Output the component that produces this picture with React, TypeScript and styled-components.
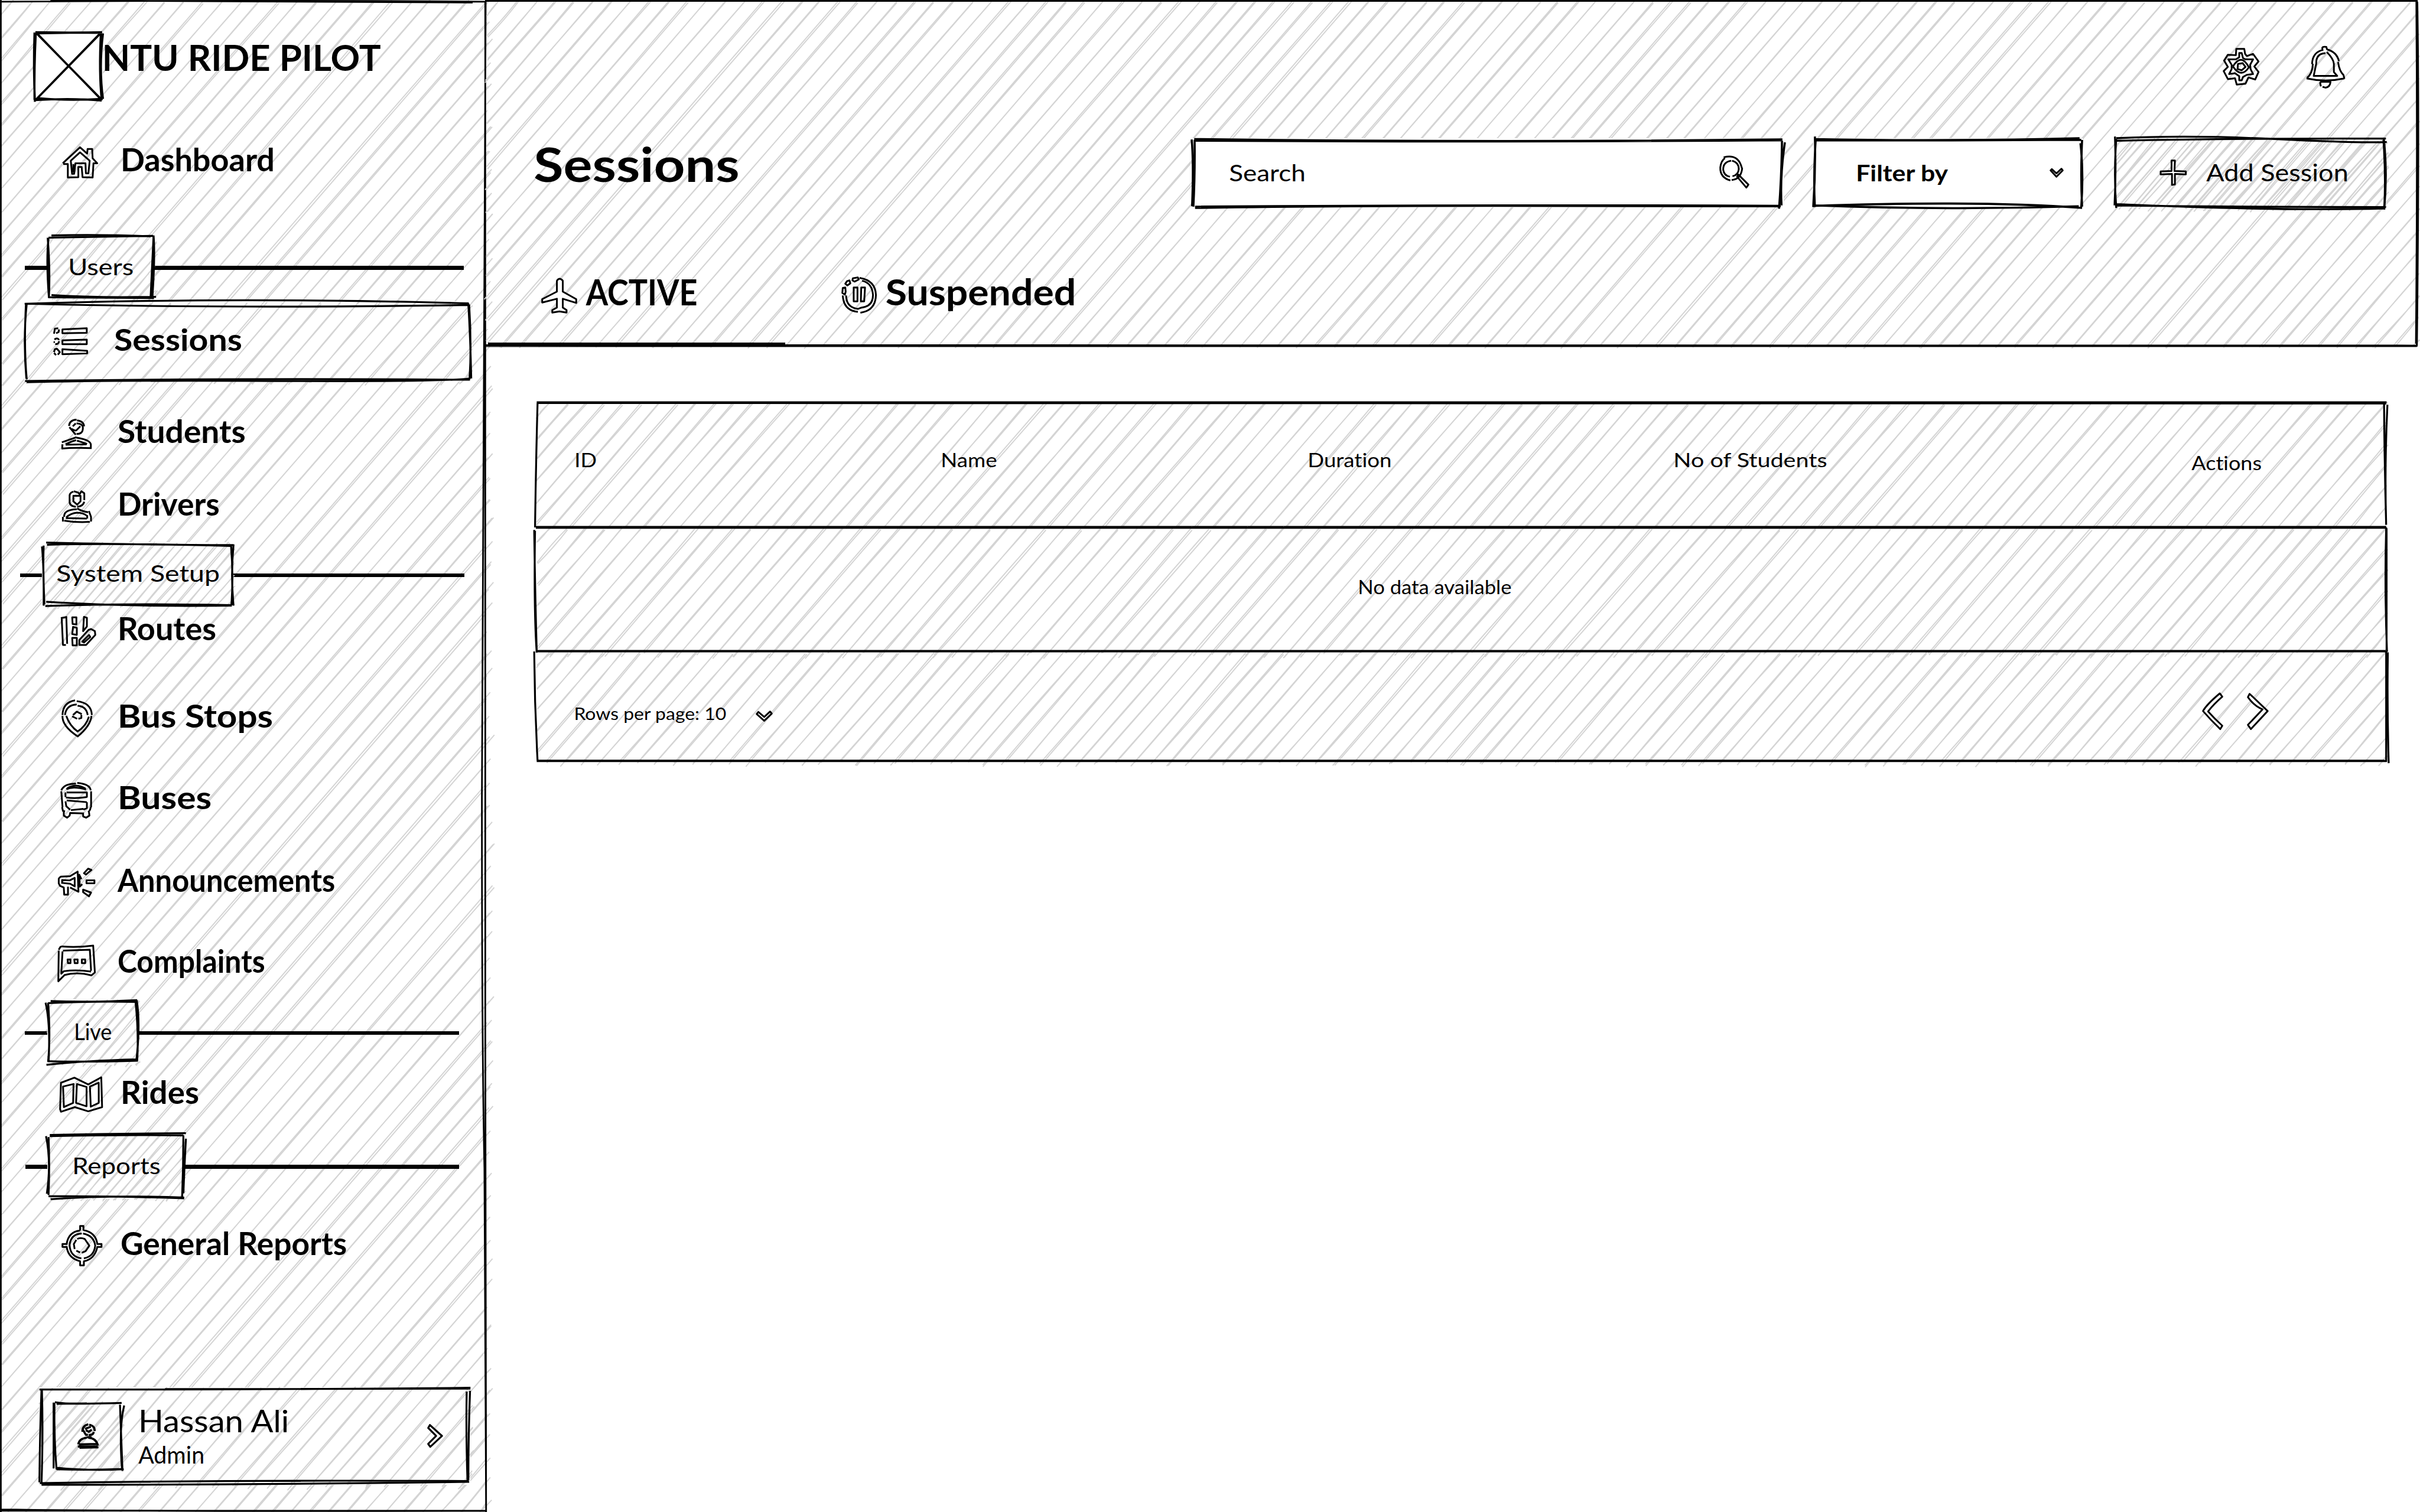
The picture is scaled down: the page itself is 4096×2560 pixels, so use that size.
import React, { useLayoutEffect, useRef } from 'react';
import styled, { createGlobalStyle } from 'styled-components';

/* Design units: the board is 5760 x 3600, shown at 4096 x 2560. */
const SCALE = 4096 / 5760;
const u = (n: number) => `${(n * SCALE).toFixed(2)}px`;

const INK = '#000';
const PENCIL = '#d4d4d4';

const GlobalStyle = createGlobalStyle`
  * { box-sizing: border-box; }
  html, body { margin: 0; padding: 0; background: #fff; }
  body { overflow: hidden; color: ${INK}; font-family: Lato, 'Open Sans', sans-serif; }
`;

/* ---------- pencil drawing ---------- */

const random = (seed: number) => {
  let s = seed * 7919 + 17;
  return () => {
    s = (s * 16807) % 2147483647;
    return s / 2147483647;
  };
};

function hatch(w: number, h: number, gap: number, seed: number, right: number, bottom: number) {
  const rnd = random(seed);
  const c = 0.656;
  const s = 0.755;
  const out: string[] = [];
  const j = (n: number) => (rnd() * 2 - 1) * n;
  for (let d = gap * 0.8; d < s * w + c * h; d += gap) {
    const onBottom = d / c > h;
    const onRight = d / s > w;
    const x1 = onBottom ? (d - c * h) / s : 0;
    const y1 = onBottom ? h : d / c;
    const x2 = onRight ? w : d / s;
    const y2 = onRight ? (d - s * w) / c : 0;
    for (let k = 0; k < 2; k++) {
      const a = onBottom ? rnd() * bottom : -rnd() * 8;
      const b = onRight ? rnd() * right : -rnd() * 8;
      const o1 = j(3.4);
      const o2 = j(3.4);
      const ax = x1 - c * a + s * o1;
      const ay = y1 + s * a + c * o1;
      const bx = x2 + c * b + s * o2;
      const by = y2 - s * b + c * o2;
      const mx = (ax + bx) / 2 + j(3);
      const my = (ay + by) / 2 + j(3);
      out.push(`M${ax.toFixed(1)} ${ay.toFixed(1)}Q${mx.toFixed(1)} ${my.toFixed(1)} ${bx.toFixed(1)} ${by.toFixed(1)}`);
    }
  }
  return out.join('');
}

const Drawing = styled.svg`
  position: absolute;
  inset: 0;
  width: 100%;
  height: 100%;
  overflow: visible;
  z-index: -1;
  fill: none;
`;

type SketchProps = {
  w: number;
  h: number;
  lines: string;
  gap?: number;
  seed?: number;
  right?: number;
  bottom?: number;
  pen?: number;
};

function Sketch({ w, h, lines, gap = 0, seed = 1, right = 4, bottom = 6, pen = 4.5 }: SketchProps) {
  return (
    <Drawing viewBox={`0 0 ${w} ${h}`} preserveAspectRatio="none" aria-hidden>
      {gap > 0 && <path d={hatch(w, h, gap, seed, right, bottom)} stroke={PENCIL} strokeWidth={2.7} />}
      <path d={lines} stroke={INK} strokeWidth={pen} />
    </Drawing>
  );
}

/* ---------- text ---------- */

const TextLine = styled.span<{ $size: number; $bold?: boolean; $width: number }>`
  display: block;
  flex: none;
  width: ${p => u(p.$width)};
  padding-top: ${u(3)};
  font-size: ${p => u(p.$size)};
  font-weight: ${p => (p.$bold ? 700 : 400)};
  font-variant-ligatures: none;
  line-height: 1.2;
  white-space: nowrap;
  transform-origin: 0 50%;
`;

/* A line of lettering stretched or condensed to the width it is given. */
function Text({ children, size, width, bold }: { children: string; size: number; width: number; bold?: boolean }) {
  const ref = useRef<HTMLSpanElement>(null);
  useLayoutEffect(() => {
    const el = ref.current;
    if (!el) return;
    const range = document.createRange();
    range.selectNodeContents(el);
    el.style.transform = 'none';
    const natural = range.getBoundingClientRect().width;
    const ratio = (width * SCALE + size * 0.03) / natural;
    el.style.transform = `translateX(${(-size * 0.015).toFixed(2)}px) scaleX(${ratio.toFixed(4)})`;
  }, [children, size, width]);
  return (
    <TextLine ref={ref} $size={size} $bold={bold} $width={width}>
      {children}
    </TextLine>
  );
}

/* ---------- icons ---------- */

type Glyph = { w: number; h: number; d: string };

const ICONS: Record<string, Glyph> = {
  home: {
    w: 82, h: 75,
    d: 'M-1 40L40 2L57 17L58 6H69L70 28L81 40H72L70 74L46 73L44 49H36V73L11 74V42H0M40 14L18 34L21 65H26L29 40H53L54 64H60L63 34ZM24 42V62',
  },
  list: {
    w: 82, h: 67,
    d: 'M22 4L80 1V12L22 13ZM22 30L80 28V39H22ZM22 51L81 55V61L22 63ZM2 14L4 2L12 1M14 4L13 10L7 13M3 28Q10 22 14 29M14 32Q12 41 5 38M1 34H4M2 58L4 51L9 50L16 58L11 64M2 60L7 65',
  },
  student: {
    w: 72, h: 72,
    d: 'M18 17Q19 3 36 2M37 4Q53 6 54 18M19 20L34 38M36 36Q52 37 51 20Q50 12 36 11M27 18L34 11M24 24Q34 30 36 27L45 18M1 56L36 44M36 45Q68 50 70 61V70M2 61V70M0 71Q30 68 72 70M10 61Q20 55 35 51M10 62L60 61M37 52L61 60',
  },
  driver: {
    w: 70, h: 75,
    d: 'M27 2Q17 5 18 14V26Q18 37 33 38M28 1L38 4L42 8L46 1L53 6V22M53 26Q50 37 36 38M27 12H44V25L36 33L27 25ZM35 44Q4 45 5 62M2 62V73M36 42Q48 49 62 51M64 48L69 62V73M5 71Q35 76 66 74M10 63Q20 54 35 52Q52 52 61 61M9 65L59 66M60 58V66',
  },
  route: {
    w: 83, h: 72,
    d: 'M0 5L15 2M2 5L5 69H12M13 2L15 66M27 3H37V20L28 19ZM29 26L38 28V45L27 43ZM27 52H38V70H28ZM55 2L62 4V25L53 36ZM44 57V69H60L82 45L81 36L72 31L66 33ZM51 61L67 45L70 50L55 63Z',
  },
  pin: {
    w: 72, h: 89,
    d: 'M31 1Q2 6 1 36M35 3Q70 7 71 36M70 38Q68 62 36 88M1 38Q0 62 36 86M7 36Q10 12 35 11M37 14Q58 15 61 36M10 38Q18 62 38 76M64 40Q58 62 36 76M26 36L35 28L47 34M46 36V43L39 45M24 39L36 45',
  },
  bus: {
    w: 72, h: 86,
    d: 'M1 20Q8 4 36 4M39 2Q70 5 71 20M72 22V60M1 22L4 60M71 60Q70 68 65 72M3 60L5 69L10 70M13 17Q30 9 60 18M15 15Q36 2 59 16M14 25H62V37M12 37Q35 40 62 36M11 25V36M14 44L62 48M11 46L13 58L22 66M62 48V62L54 66M24 67L54 64M7 71V80L15 85L21 80L22 74L55 75M53 76V82L60 85L68 80L67 72',
  },
  horn: {
    w: 88, h: 68,
    d: 'M2 24L7 20L29 19L47 8L49 56L29 46M24 44V63H15L14 46L5 42L2 36V24M10 28L28 29L40 23V43L29 37L10 35ZM50 14L56 26M51 18L52 44L58 38M62 12L72 1L80 4L67 15ZM68 29H87V36H68ZM60 51L79 58L74 67L60 57Z',
  },
  chat: {
    w: 88, h: 86,
    d: 'M2 10L6 3L10 2Q45 5 84 0L88 64L80 71Q45 62 16 70L1 85L2 12M12 12L76 10L79 60M11 14L8 67L14 61Q45 57 79 62M23 33H30V42H24ZM39 33H47V42H40ZM57 33H65V42H57Z',
  },
  map: {
    w: 104, h: 83,
    d: 'M3 13L35 1L68 17L99 0L101 71L68 81L36 71L3 82L1 76ZM8 22L33 16L32 61L10 71ZM41 16L64 23V69L39 61ZM72 22L93 13V61L74 70Z',
  },
  target: {
    w: 94, h: 96,
    d: 'M43 12V1H51V12M51 11Q80 16 84 44H94V51H84Q78 80 52 85V95H43V85Q15 78 11 51H1V44H11Q15 15 43 12M47 19Q21 20 18 46Q19 74 46 78M52 78Q76 74 79 48Q76 24 50 19M30 56L28 44L34 34M36 32Q44 28 54 32L65 48L56 61L47 65M43 64L34 60',
  },
  person: {
    w: 51, h: 59,
    d: 'M12 20Q11 6 26 2M28 3Q42 6 41 18M39 20Q38 28 27 28M13 15L20 27L25 27M18 13L32 8M20 16L27 20L34 15M2 50Q4 36 22 34M26 34Q45 35 49 53M1 55L48 55M4 50L46 49M5 58L50 57M22 33H34',
  },
  plane: {
    w: 84, h: 82,
    d: 'M36 6Q42 -3 50 6V32L82 50V59L50 49V70L59 76V82L42 79L25 82V76L36 70V49L1 58V50L36 32Z',
  },
  pause: {
    w: 82, h: 86,
    d: 'M42 2Q80 8 81 43Q80 80 44 85M38 83Q4 80 2 44M10 44Q10 72 38 76L46 73Q74 70 74 43Q72 14 48 9M26 3L38 1L40 6L30 11L25 8ZM12 10L18 8L20 15L13 20L8 16ZM2 26L8 25L9 35L7 42L1 38ZM28 25H37V58H28ZM46 25H55L53 58H45Z',
  },
  gear: {
    w: 86, h: 90,
    d: 'M31 1H50L52 13L56 18L71 13L84 31L74 43L84 56L76 74L60 69L53 84L32 86L28 71L11 73L1 54L11 44L2 29L11 15L30 16ZM38 11H44L47 23L53 26H71L64 39L65 49L71 61L56 63L47 68L44 76H38V66L28 59L14 61L20 49V39L12 26H30L38 21ZM23 43Q43 10 61 45Q43 72 23 43M35 37L46 35L53 44L44 52L34 49Z',
  },
  bell: {
    w: 90, h: 101,
    d: 'M13 43Q14 14 40 9M49 8Q72 14 77 36M75 38Q78 60 88 69L90 78M15 42Q14 66 1 76M0 77Q45 87 90 77M45 17Q22 18 23 42L17 71H73L65 62V42Q64 30 48 14M38 8Q35 0 47 2L49 9M32 85H57Q56 98 45 99L38 97M32 86L34 96',
  },
  search: {
    w: 70, h: 74,
    d: 'M9 2Q40 -6 50 20L53 29Q50 54 28 56M25 57Q0 50 1 26Q3 10 12 4M27 10Q7 13 8 32Q10 46 24 48M29 10Q45 14 45 30Q44 44 30 47M44 43L68 67L63 74L41 48Z',
  },
  plus: { w: 60, h: 60, d: 'M26 1H34L33 26L60 27V34L34 33V58L27 59V33L0 34V27L26 26Z' },
  caret: { w: 31, h: 20, d: 'M1 5L4 2L15 12L27 1L30 5L15 20Z' },
  caretWide: { w: 38, h: 24, d: 'M1 7L5 2L19 14L33 1L37 6L19 23Z' },
  next: { w: 35, h: 54, d: 'M5 1L34 27L6 53L1 46L20 27L1 8Z' },
  pagePrev: { w: 48, h: 86, d: 'M41 0Q10 26 1 42Q20 64 42 85L47 77Q28 60 13 43Q28 24 47 8Z' },
  pageNext: { w: 49, h: 86, d: 'M5 1L1 9Q16 30 36 38L1 75L8 85L48 42Z' },
};

const IconSvg = styled.svg<{ $drop: number }>`
  display: block;
  flex: none;
  overflow: visible;
  fill: none;
  stroke: ${INK};
  margin-top: ${p => u(p.$drop)};
`;

function Icon({ name, drop = 0, pen = 4.2, fill }: { name: string; drop?: number; pen?: number; fill?: string }) {
  const g = ICONS[name];
  return (
    <IconSvg
      $drop={drop}
      width={g.w * SCALE}
      height={g.h * SCALE}
      viewBox={`0 0 ${g.w} ${g.h}`}
      strokeWidth={pen}
      strokeLinejoin="round"
      aria-hidden
    >
      <path d={g.d} fill={fill} />
    </IconSvg>
  );
}

/* ---------- layout ---------- */

const Page = styled.div`
  display: flex;
  width: 4096px;
  height: 2560px;
  overflow: hidden;
  background: #fff;
`;

const Sidebar = styled.aside`
  position: relative;
  isolation: isolate;
  flex: none;
  display: flex;
  flex-direction: column;
  width: ${u(1155)};
  height: ${u(3600)};
`;

const Brand = styled.div`
  display: flex;
  align-items: flex-start;
  height: ${u(240)};
  padding: ${u(74)} 0 0 ${u(80)};
`;

const Logo = styled.div`
  position: relative;
  isolation: isolate;
  flex: none;
  width: ${u(165)};
  height: ${u(164)};
  background: #fff;
`;

const BrandName = styled.div`
  padding-top: ${u(8)};
`;

const NavItem = styled.a<{ $gap: number; $left: number }>`
  display: flex;
  align-items: center;
  flex: none;
  height: ${u(100)};
  margin-top: ${p => u(p.$gap)};
  padding-left: ${p => u(p.$left)};
`;

const NavIcon = styled.span<{ $w: number }>`
  flex: none;
  width: ${p => u(p.$w)};
`;

const ActiveItem = styled.a`
  position: relative;
  isolation: isolate;
  display: flex;
  align-items: center;
  flex: none;
  width: ${u(1063)};
  height: ${u(192)};
  margin: ${u(6)} 0 0 ${u(57)};
  padding: 0 0 ${u(14)} ${u(70)};
  background: #fff;
`;

const Divider = styled.div<{ $gap: number; $h: number; $left: number; $w: number }>`
  display: flex;
  align-items: center;
  flex: none;
  width: ${p => u(p.$w)};
  height: ${p => u(p.$h)};
  margin: ${p => u(p.$gap)} 0 0 ${p => u(p.$left)};
`;

const Rule = styled.span<{ $w?: number }>`
  flex: ${p => (p.$w ? 'none' : '1')};
  width: ${p => (p.$w ? u(p.$w) : 'auto')};
  height: ${u(9)};
  margin-top: ${u(5)};
  background: ${INK};
`;

const Tag = styled.span<{ $w: number }>`
  position: relative;
  isolation: isolate;
  flex: none;
  display: flex;
  align-items: center;
  justify-content: center;
  width: ${p => u(p.$w)};
  height: 100%;
  padding-bottom: ${u(6)};
  background: #fff;
`;

const ProfileCard = styled.div`
  position: relative;
  isolation: isolate;
  flex: none;
  display: flex;
  align-items: center;
  width: ${u(1027)};
  height: ${u(232)};
  margin: ${u(295)} 0 0 ${u(93)};
  padding: 0 ${u(67)} 0 ${u(33)};
  background: #fff;
`;

const Avatar = styled.div`
  position: relative;
  isolation: isolate;
  flex: none;
  display: flex;
  align-items: center;
  justify-content: center;
  width: ${u(168)};
  height: ${u(162)};
`;

const ProfileText = styled.div`
  flex: 1;
  padding: 0 0 ${u(6)} ${u(36)};
`;

const Content = styled.main`
  flex: 1;
  display: flex;
  flex-direction: column;
`;

const Header = styled.header`
  position: relative;
  isolation: isolate;
  flex: none;
  width: ${u(4602)};
  height: ${u(822)};
`;

const IconRow = styled.div`
  display: flex;
  align-items: center;
  justify-content: flex-end;
  gap: ${u(112)};
  height: ${u(210)};
  padding: ${u(109)} ${u(177)} 0 0;
`;

const Toolbar = styled.div`
  display: flex;
  align-items: center;
  height: ${u(165)};
  margin-top: ${u(119)};
  padding: 0 ${u(77)} 0 ${u(118)};
`;

const PageTitle = styled.h1`
  margin: 0 auto 0 0;
  padding-bottom: ${u(48)};
`;

const Field = styled.div<{ $w: number; $gap: number; $pad: number; $padRight: number; $clear?: boolean }>`
  position: relative;
  isolation: isolate;
  flex: none;
  display: flex;
  align-items: center;
  justify-content: space-between;
  width: ${p => u(p.$w)};
  height: 100%;
  margin-left: ${p => u(p.$gap)};
  padding: 0 ${p => u(p.$padRight)} ${u(4)} ${p => u(p.$pad)};
  background: ${p => (p.$clear ? 'transparent' : '#fff')};
`;

const Tabs = styled.nav`
  display: flex;
  height: ${u(181)};
  margin-top: ${u(149)};
  padding-left: ${u(7)};
`;

const Tab = styled.a<{ $pad: number; $active?: boolean }>`
  display: flex;
  align-items: center;
  gap: ${u(23)};
  width: ${u(707)};
  padding: 0 0 ${p => u(p.$active ? 52 : 61)} ${p => u(p.$pad)};
  border-bottom: ${p => (p.$active ? `${u(9)} solid ${INK}` : 'none')};
`;

const TabLabel = styled.span`
  padding-bottom: ${u(20)};
`;

const Table = styled.section`
  width: ${u(4405)};
  margin: ${u(136)} 0 0 ${u(120)};
`;

const HeadRow = styled.div`
  position: relative;
  isolation: isolate;
  display: grid;
  grid-template-columns: ${u(872)} ${u(873)} ${u(871)} ${u(1233)} 1fr;
  align-items: center;
  height: ${u(298)};
  padding: 0 0 ${u(28)} ${u(93)};
`;

const HeadCell = styled.div<{ $drop?: number }>`
  padding-top: ${p => u(p.$drop ?? 0)};
`;

const EmptyRow = styled.div`
  position: relative;
  isolation: isolate;
  display: flex;
  align-items: center;
  justify-content: center;
  height: ${u(295)};
  padding: 0 ${u(124)} ${u(16)} 0;
`;

const FootRow = styled.div`
  position: relative;
  isolation: isolate;
  display: flex;
  align-items: center;
  gap: ${u(72)};
  height: ${u(261)};
  padding: ${u(30)} ${u(281)} 0 ${u(92)};
`;

const Pager = styled.div`
  display: flex;
  gap: ${u(60)};
  margin: 0 0 ${u(6)} auto;
`;

/* ---------- parts ---------- */

type NavProps = { icon: string; label: string; width: number; gap: number; left: number; textAt: number };

function Nav({ icon, label, width, gap, left, textAt }: NavProps) {
  return (
    <NavItem $gap={gap} $left={left}>
      <NavIcon $w={textAt - left}>
        <Icon name={icon} drop={17} />
      </NavIcon>
      <Text size={74} width={width} bold>
        {label}
      </Text>
    </NavItem>
  );
}

type SectionProps = {
  label: string; textW: number; gap: number; h: number; left: number; w: number; lead: number; tagW: number; size: number; seed: number; lines: string;
};

function Section({ label, textW, gap, h, left, w, lead, tagW, size, seed, lines }: SectionProps) {
  return (
    <Divider $gap={gap} $h={h} $left={left} $w={w}>
      <Rule $w={lead} />
      <Tag $w={tagW}>
        <Sketch w={tagW} h={h} gap={19} seed={seed} right={6} bottom={6} lines={lines} pen={4.6} />
        <Text size={size} width={textW}>
          {label}
        </Text>
      </Tag>
      <Rule />
    </Divider>
  );
}

export default function App() {
  return (
    <>
      <GlobalStyle />
      <Page>
        <Sidebar>
          <Sketch
            w={1155} h={3600} gap={34} seed={5} right={30} bottom={0} pen={4}
            lines="M0 4Q600 0 1155 4M120 1L1125 6M2 0V3600M1156 4Q1147 1100 1147 1900Q1147 2500 1153 2780L1157 3600M1155 4V2400Q1154 2700 1157 3600M0 3594Q400 3599 1157 3597M0 3597H1157"
          />
          <Brand>
            <Logo>
              <Sketch
                w={165} h={166} pen={5}
                lines="M4 2L162 4M8 5L163 2M2 3Q-1 90 3 170M5 4Q1 90 2 165M160 3Q155 100 162 166M165 5Q155 88 165 163M2 166Q90 160 162 167M8 161Q80 168 162 163M5 2L162 166M8 6L160 163M160 3L6 164M158 6L8 162"
              />
            </Logo>
            <BrandName>
              <Text size={86} width={660} bold>NTU RIDE PILOT</Text>
            </BrandName>
          </Brand>

          <Nav icon="home" label="Dashboard" width={364} gap={88} left={150} textAt={288} />

          <Section
            label="Users" textW={154} size={54} gap={132} h={151} left={59} w={1045} lead={53} tagW={256} seed={11}
            lines="M3 7Q-3 60 4 150M1 6Q7 80 4 148M3 6L252 2M10 1Q120 -2 246 3M253 1Q257 50 250 150M253 3L246 149M10 143Q120 150 259 147M4 148L254 150"
          />
          <ActiveItem>
            <Sketch
              w={1063} h={192} gap={34} seed={3} bottom={10}
              lines="M1 6Q500 -10 1058 5M4 6Q500 18 1058 9M6 6Q-3 90 5 184M4 8Q-1 110 6 186M1057 5Q1062 90 1064 184M1059 8Q1065 100 1060 186M2 190Q500 183 1061 187M6 193Q200 188 600 190T1060 184"
            />
            <NavIcon $w={146}>
              <Icon name="list" drop={16} />
            </NavIcon>
            <Text size={73} width={302} bold>Sessions</Text>
          </ActiveItem>

          <Nav icon="student" label="Students" width={302} gap={66} left={146} textAt={281} />
          <Nav icon="driver" label="Drivers" width={240} gap={72} left={147} textAt={281} />

          <Section
            label="System Setup" textW={387} size={55} gap={44} h={152} left={48} w={1057} lead={52} tagW={456} seed={14}
            lines="M10 1Q200 6 456 7M12 6Q200 2 450 9M0 10Q5 60 4 151M4 8Q2 70 6 148M456 5Q449 80 456 151M450 6Q456 80 451 150M10 142Q200 154 452 151M8 152Q200 145 452 150"
          />
          <Nav icon="route" label="Routes" width={232} gap={1} left={145} textAt={281} />
          <Nav icon="pin" label="Bus Stops" width={367} gap={108} left={147} textAt={281} />
          <Nav icon="bus" label="Buses" width={221} gap={95} left={145} textAt={281} />
          <Nav icon="horn" label="Announcements" width={515} gap={96} left={138} textAt={281} />
          <Nav icon="chat" label="Complaints" width={348} gap={93} left={138} textAt={281} />

          <Section
            label="Live" textW={88} size={54} gap={43} h={156} left={59} w={1034} lead={54} tagW={216} seed={21}
            lines="M8 4Q100 8 214 2M2 9Q100 4 214 6M-4 8Q8 60 3 150M2 8Q8 90 2 148M213 2Q222 60 212 146M210 5Q218 80 214 146M0 147Q90 150 216 146M-2 156Q90 146 214 143"
          />
          <Nav icon="map" label="Rides" width={184} gap={13} left={142} textAt={288} />

          <Section
            label="Reports" textW={208} size={54} gap={49} h={158} left={60} w={1032} lead={53} tagW={327} seed={26}
            lines="M6 5Q150 2 330 1M6 8Q160 4 324 6M-3 8Q10 70 -1 145M3 10Q6 80 3 148M324 6Q324 80 321 155M330 14Q326 90 324 144M3 151Q150 150 326 156M8 158Q150 148 326 154"
          />
          <Nav icon="target" label="General Reports" width={536} gap={53} left={147} textAt={288} />

          <ProfileCard>
            <Sketch
              w={1027} h={232} gap={34} seed={8} bottom={16} right={14}
              lines="M1 5Q500 6 1027 1M300 4L1027 3M6 4Q2 110 1 226M7 6Q10 110 6 230M1018 10Q1016 110 1020 226M1026 8Q1022 110 1022 222M2 228Q500 220 1020 223M6 232Q500 232 1024 225"
            />
            <Avatar>
              <Sketch
                w={168} h={162} gap={24} seed={33}
                lines="M4 0Q30 6 163 2M8 4L80 3M1 1V158M3 2Q2 90 8 160M159 6L165 164M169 8Q156 60 164 162M6 156Q80 164 168 160M8 160Q80 162 166 159"
              />
              <Icon name="person" pen={5} />
            </Avatar>
            <ProfileText>
              <Text size={74} width={356}>Hassan Ali</Text>
              <Text size={58} width={155}>Admin</Text>
            </ProfileText>
            <Icon name="next" fill="#fff" pen={4.5} />
          </ProfileCard>
        </Sidebar>

        <Content>
          <Header>
            <Sketch
              w={4602} h={822} gap={34} seed={9} bottom={9} pen={4.5}
              lines="M0 2H4600M0 1Q2000 4 4600 1M0 822Q2000 822 4600 823M0 824Q2300 821 4598 824M4599 4Q4604 300 4598 822M4597 4Q4600 400 4596 818"
            />
            <IconRow>
              <Icon name="gear" drop={2} />
              <Icon name="bell" drop={2} />
            </IconRow>
            <Toolbar>
              <PageTitle>
                <Text size={114} width={485} bold>Sessions</Text>
              </PageTitle>
              <Field $w={1408} $gap={0} $pad={89} $padRight={82}>
                <Sketch
                  w={1408} h={165} pen={5}
                  lines="M6 2Q700 11 1406 3M8 6Q700 10 1406 5M0 3Q5 60 1 162M7 4Q8 90 4 163M1405 6Q1404 90 1398 168M1412 10Q1400 90 1404 160M8 163Q700 158 1402 161M8 166Q300 161 700 161T1402 162"
                />
                <Text size={54} width={180}>Search</Text>
                <Icon name="search" />
              </Field>
              <Field $w={641} $gap={71} $pad={102} $padRight={46}>
                <Sketch
                  w={641} h={165} pen={5}
                  lines="M2 2Q300 8 634 0M4 5Q300 6 638 4M4 -4Q6 80 0 164M6 2Q0 90 4 164M636 12Q644 80 638 164M640 4Q636 90 640 163M2 160Q320 172 632 162M4 161Q400 148 640 166"
                />
                <Text size={54} width={217} bold>Filter by</Text>
                <Icon name="caret" drop={4} pen={4.2} />
              </Field>
              <Field $w={647} $gap={76} $pad={109} $padRight={92} $clear>
                <Sketch
                  w={647} h={165} gap={20} seed={41} bottom={14} right={10} pen={4.6}
                  lines="M4 0Q180 -8 380 2T648 9M2 6Q300 0 646 1M1 -4Q4 80 0 160M4 2Q-2 90 4 166M641 2Q650 80 642 170M640 4Q646 90 642 166M2 160Q320 164 646 164M4 157Q400 174 644 167"
                />
                <Icon name="plus" drop={4} fill="#fff" />
                <Text size={57} width={336}>Add Session</Text>
              </Field>
            </Toolbar>
            <Tabs>
              <Tab $pad={128} $active>
                <Icon name="plane" fill="#fff" />
                <TabLabel>
                  <Text size={86} width={262} bold>ACTIVE</Text>
                </TabLabel>
              </Tab>
              <Tab $pad={135}>
                <Icon name="pause" />
                <TabLabel>
                  <Text size={86} width={450} bold>Suspended</Text>
                </TabLabel>
              </Tab>
            </Tabs>
          </Header>

          <Table>
            <HeadRow>
              <Sketch
                w={4405} h={298} gap={33} seed={51} bottom={2}
                lines="M2 0H4405M3 2Q2000 0 4404 3M4 2Q0 150 -2 298M4399 4Q4400 150 4404 292M4407 6Q4400 150 4404 292M0 297H4404"
              />
              <HeadCell><Text size={46} width={51}>ID</Text></HeadCell>
              <HeadCell><Text size={46} width={132}>Name</Text></HeadCell>
              <HeadCell><Text size={46} width={198}>Duration</Text></HeadCell>
              <HeadCell><Text size={46} width={364}>No of Students</Text></HeadCell>
              <HeadCell $drop={16}><Text size={46} width={165}>Actions</Text></HeadCell>
            </HeadRow>
            <EmptyRow>
              <Sketch
                w={4405} h={295} gap={33} seed={57} bottom={22}
                lines="M0 1H4404M0 294H4406M-4 6Q-2 150 2 296M-2 8Q-5 200 2 298M4404 0Q4400 150 4406 296M4405 2V296"
              />
              <Text size={46} width={364}>No data available</Text>
            </EmptyRow>
            <FootRow>
              <Sketch
                w={4405} h={261} gap={33} seed={63} bottom={18} right={6}
                lines="M0 0H4406M2 261H4406M2 260H4400M-4 0Q-3 130 4 260M4404 0V262M4408 2Q4406 130 4410 266"
              />
              <Text size={41} width={361}>Rows per page: 10</Text>
              <Icon name="caretWide" drop={16} pen={4.2} />
              <Pager>
                <Icon name="pagePrev" fill="#fff" />
                <Icon name="pageNext" fill="#fff" />
              </Pager>
            </FootRow>
          </Table>
        </Content>
      </Page>
    </>
  );
}
